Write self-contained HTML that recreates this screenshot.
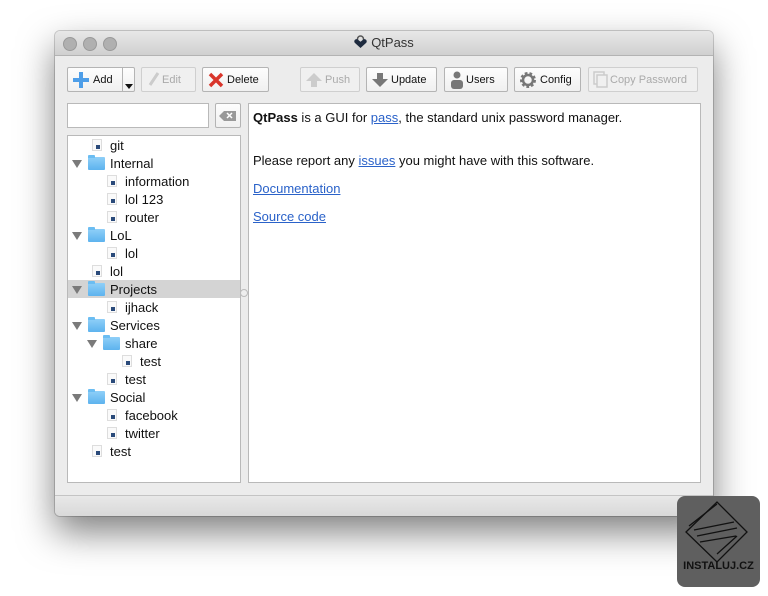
<!DOCTYPE html>
<html><head><style>
body{margin:0;width:768px;height:596px;background:#fff;position:relative;overflow:hidden;font-family:"Liberation Sans",sans-serif;}
.win{position:absolute;left:55px;top:31px;width:658px;height:485px;background:#ececec;border-radius:5px;box-shadow:0 16px 36px rgba(0,0,0,.5),0 0 0 1px rgba(0,0,0,.18);overflow:hidden}
.title{height:24px;background:linear-gradient(#e8e8e8,#d0d0d0);border-bottom:1px solid #b3b3b3;position:relative;font-size:13px;color:#333;text-align:center;line-height:24px}
.dot{position:absolute;top:6px;width:12px;height:12px;border-radius:50%;background:#b0b0b0;border:0.5px solid #9a9a9a}
.btn{position:absolute;top:36px;height:25px;border:1px solid #b4b4b4;background:linear-gradient(#fdfdfd,#f0f0f0);border-radius:2px;font-size:11px;color:#111;line-height:25px;box-sizing:border-box}
.btn.dis{color:#aaa;border-color:#cfcfcf;background:#f0f0f0}
.btn span{position:absolute;top:0}
.tree{position:absolute;left:12px;top:104px;width:174px;height:348px;background:#fff;border:1px solid #b9b9b9;box-sizing:border-box;font-size:13px;color:#111}
.row{position:absolute;left:0;width:172px;height:18px;line-height:19px}
.row .t{position:absolute;top:0}
.file{position:absolute;top:3px;width:10px;height:12px;background:#fafafa;border:1px solid #ddd;box-sizing:border-box}
.file:after{content:"";position:absolute;left:3px;top:5px;width:4px;height:4px;background:#2a4a7a}
.fold{position:absolute;top:3px;width:17px;height:13px;background:linear-gradient(#8fcff8,#5db3ee);border-radius:1px}
.fold:before{content:"";position:absolute;left:0;top:-2px;width:7px;height:3px;background:#6bbdf2;border-radius:1px 1px 0 0}
.arr{position:absolute;top:6px;width:0;height:0;border-left:5px solid transparent;border-right:5px solid transparent;border-top:8px solid #7a7a7a}
.main{position:absolute;left:193px;top:72px;width:453px;height:380px;background:#fff;border:1px solid #b9b9b9;box-sizing:border-box;font-size:13px;color:#111}
.main p{position:absolute;left:4px;margin:0}
a{color:#2a62c9;text-decoration:underline}
</style></head><body>
<div class="win">
<div class="title"><div class="dot" style="left:8px"></div><div class="dot" style="left:28px"></div><div class="dot" style="left:48px"></div>
<span style="position:relative;left:0"><svg width="13" height="14" viewBox="0 0 13 14" style="vertical-align:-2px;margin-right:4px"><path d="M3.5 6V4a3 3 0 0 1 6 0v2" stroke="#555" fill="none" stroke-width="1.5"/><path d="M6.5 13L1 8a2.2 2.2 0 0 1 3-3.3l2.5 2 2.5-2A2.2 2.2 0 0 1 12 8z" fill="#1e2b3f"/></svg>QtPass</span></div>
<div class="btn" style="left:12px;width:68px"><svg width="18" height="18" style="position:absolute;left:4px;top:3px"><path d="M9 1v16M1 9h16" stroke="#4e9ee8" stroke-width="4"/></svg><span style="left:25px">Add</span><span style="left:54px;border-left:1px solid #b4b4b4;height:23px;width:13px"></span><span style="left:57px;top:16px;border-left:4px solid transparent;border-right:4px solid transparent;border-top:5px solid #111;height:0"></span></div>
<div class="btn dis" style="left:86px;width:55px"><svg width="14" height="16" style="position:absolute;left:5px;top:4px"><path d="M11 1L3 13" stroke="#ccc" stroke-width="3"/></svg><span style="left:20px">Edit</span></div>
<div class="btn" style="left:147px;width:67px"><svg width="16" height="16" style="position:absolute;left:5px;top:4px"><path d="M2 2L14 14M14 2L2 14" stroke="#d9352b" stroke-width="3.5"/></svg><span style="left:24px">Delete</span></div>
<div class="btn dis" style="left:245px;width:60px"><svg width="18" height="16" style="position:absolute;left:4px;top:4px"><path d="M9 1L1 9h5v6h6V9h5z" fill="#ccc"/></svg><span style="left:24px">Push</span></div>
<div class="btn" style="left:311px;width:71px"><svg width="18" height="16" style="position:absolute;left:4px;top:4px"><path d="M6 1h6v6h5l-8 8-8-8h5z" fill="#777"/></svg><span style="left:24px">Update</span></div>
<div class="btn" style="left:389px;width:64px"><svg width="14" height="18" style="position:absolute;left:5px;top:3px"><circle cx="7" cy="4" r="3.5" fill="#777"/><rect x="1" y="9" width="12" height="9" rx="3" fill="#777"/></svg><span style="left:21px">Users</span></div>
<div class="btn" style="left:459px;width:67px"><svg width="18" height="18" style="position:absolute;left:4px;top:3px"><circle cx="9" cy="9" r="6" fill="none" stroke="#777" stroke-width="4" stroke-dasharray="2.4 1.8"/><circle cx="9" cy="9" r="5" fill="none" stroke="#777" stroke-width="2.5"/></svg><span style="left:25px">Config</span></div>
<div class="btn dis" style="left:533px;width:110px"><svg width="16" height="18" style="position:absolute;left:4px;top:3px"><rect x="1" y="1" width="10" height="12" fill="none" stroke="#ccc" stroke-width="1.5"/><rect x="4" y="4" width="10" height="12" fill="#f0f0f0" stroke="#ccc" stroke-width="1.5"/></svg><span style="left:21px">Copy Password</span></div>
<div style="position:absolute;left:12px;top:72px;width:142px;height:25px;background:#fff;border:1px solid #b9b9b9;box-sizing:border-box"></div>
<div class="btn" style="left:160px;top:72px;width:26px;height:25px"><svg width="18" height="12" style="position:absolute;left:3px;top:6px"><path d="M5 1h12v10H5L0 6z" fill="#999"/><path d="M8 3l5 5M13 3l-5 5" stroke="#fff" stroke-width="1.5"/></svg></div>
<div class="tree">
<div class="row" style="top:0"><div class="file" style="left:24px"></div><span class="t" style="left:42px">git</span></div>
<div class="row" style="top:18px"><div class="arr" style="left:4px"></div><div class="fold" style="left:20px"></div><span class="t" style="left:42px">Internal</span></div>
<div class="row" style="top:36px"><div class="file" style="left:39px"></div><span class="t" style="left:57px">information</span></div>
<div class="row" style="top:54px"><div class="file" style="left:39px"></div><span class="t" style="left:57px">lol 123</span></div>
<div class="row" style="top:72px"><div class="file" style="left:39px"></div><span class="t" style="left:57px">router</span></div>
<div class="row" style="top:90px"><div class="arr" style="left:4px"></div><div class="fold" style="left:20px"></div><span class="t" style="left:42px">LoL</span></div>
<div class="row" style="top:108px"><div class="file" style="left:39px"></div><span class="t" style="left:57px">lol</span></div>
<div class="row" style="top:126px"><div class="file" style="left:24px"></div><span class="t" style="left:42px">lol</span></div>
<div class="row" style="top:144px;background:#d4d4d4"><div class="arr" style="left:4px"></div><div class="fold" style="left:20px"></div><span class="t" style="left:42px">Projects</span></div>
<div class="row" style="top:162px"><div class="file" style="left:39px"></div><span class="t" style="left:57px">ijhack</span></div>
<div class="row" style="top:180px"><div class="arr" style="left:4px"></div><div class="fold" style="left:20px"></div><span class="t" style="left:42px">Services</span></div>
<div class="row" style="top:198px"><div class="arr" style="left:19px"></div><div class="fold" style="left:35px"></div><span class="t" style="left:57px">share</span></div>
<div class="row" style="top:216px"><div class="file" style="left:54px"></div><span class="t" style="left:72px">test</span></div>
<div class="row" style="top:234px"><div class="file" style="left:39px"></div><span class="t" style="left:57px">test</span></div>
<div class="row" style="top:252px"><div class="arr" style="left:4px"></div><div class="fold" style="left:20px"></div><span class="t" style="left:42px">Social</span></div>
<div class="row" style="top:270px"><div class="file" style="left:39px"></div><span class="t" style="left:57px">facebook</span></div>
<div class="row" style="top:288px"><div class="file" style="left:39px"></div><span class="t" style="left:57px">twitter</span></div>
<div class="row" style="top:306px"><div class="file" style="left:24px"></div><span class="t" style="left:42px">test</span></div>
</div>
<div style="position:absolute;left:185px;top:258px;width:6px;height:6px;border-radius:50%;border:1px solid #bbb;background:#eee"></div>
<div class="main">
<p style="top:6px"><b>QtPass</b> is a GUI for <a>pass</a>, the standard unix password manager.</p>
<p style="top:49px">Please report any <a>issues</a> you might have with this software.</p>
<p style="top:77px"><a>Documentation</a></p>
<p style="top:105px"><a>Source code</a></p>
</div>
<div style="position:absolute;left:0;top:464px;width:658px;height:21px;border-top:1px solid #c4c4c4;background:linear-gradient(#e8e8e8,#d8d8d8)"></div>
</div>
<div style="position:absolute;left:677px;top:496px;width:83px;height:91px;background:#5f5f5f;border-radius:8px">
<svg width="83" height="70" style="position:absolute;left:0;top:0"><g fill="none" stroke="#111" stroke-width="1.3"><path d="M9 36L40 6l30 30-30 30z"/><path d="M17 34l40-8M20 40l40-8M23 46l36-6M12 30l28-22M60 40L40 58"/></g></svg>
<div style="position:absolute;left:0;width:83px;top:64px;text-align:center;font-size:11px;color:#111;font-weight:bold">INSTALUJ.CZ</div></div>
</body></html>
